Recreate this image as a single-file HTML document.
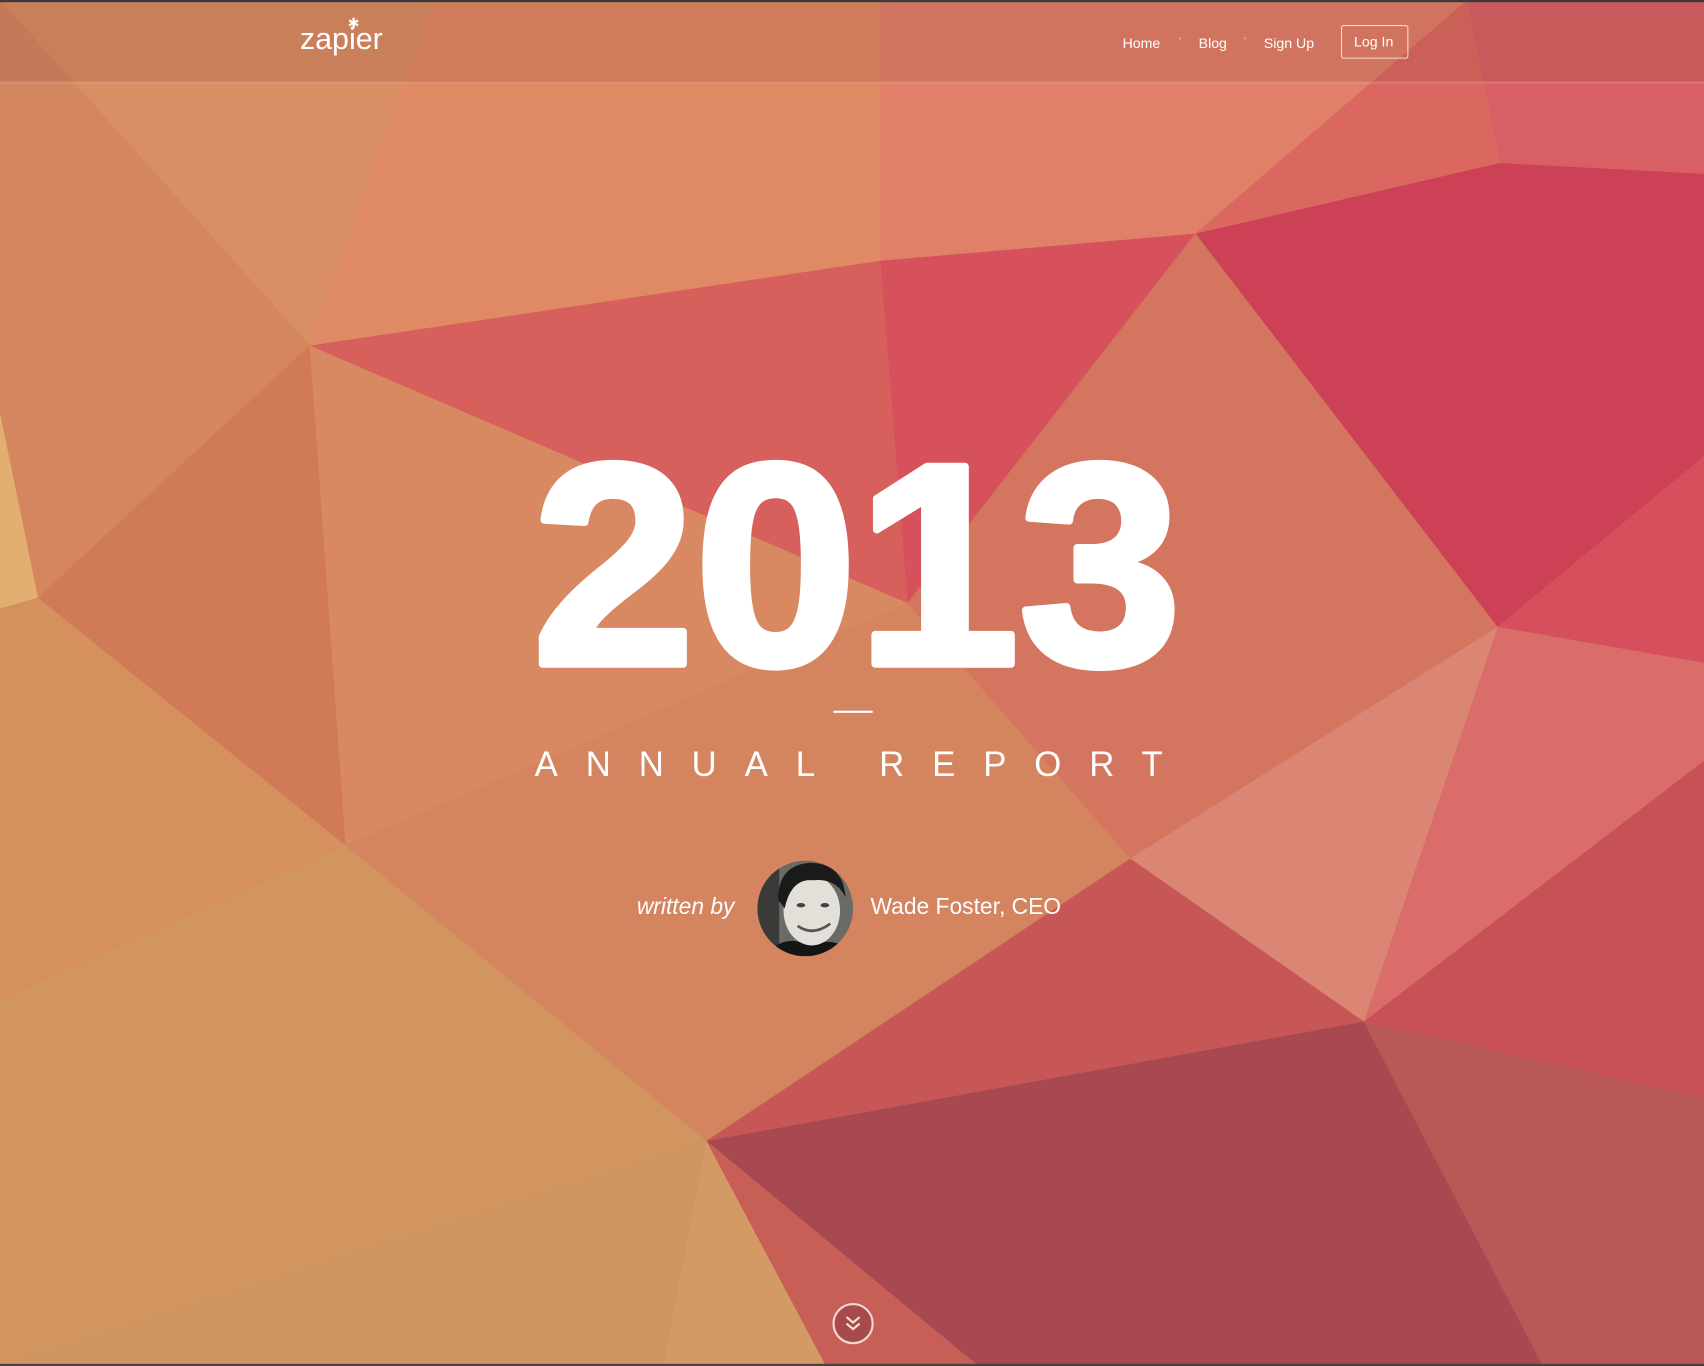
<!DOCTYPE html>
<html><head><meta charset="utf-8"><style>
html,body{margin:0;padding:0;background:#333;overflow:hidden}
svg{display:block}
</style></head><body>
<svg width="1704" height="1366" viewBox="0 0 1568 1257" preserveAspectRatio="none" xmlns="http://www.w3.org/2000/svg">
<rect width="1568" height="1257" fill="#d98a60"/>
<polygon points="0,0 400,0 285,318" fill="#dd9064"/>
<polygon points="400,0 810,0 810,240 285,318" fill="#e48a66"/>
<polygon points="810,0 1350,0 1100,215 810,240" fill="#e5806a"/>
<polygon points="1350,0 1568,0 1568,160 1380,150" fill="#da5b66"/>
<polygon points="1350,0 1380,150 1100,215" fill="#df6461"/>
<polygon points="0,0 285,318 35,550 0,380" fill="#d6875f"/>
<polygon points="0,380 35,550 0,560" fill="#e8b672"/>
<polygon points="285,318 810,240 835,555" fill="#da5a5c"/>
<polygon points="810,240 1100,215 835,555" fill="#d94a5a"/>
<polygon points="1100,215 1380,150 1568,160 1568,420 1378,577" fill="#cd3855"/>
<polygon points="1100,215 1378,577 1040,790 835,555" fill="#d6735f"/>
<polygon points="285,318 835,555 318,778" fill="#db8a62"/>
<polygon points="35,550 285,318 318,778" fill="#d27957"/>
<polygon points="0,560 35,550 318,778 0,920" fill="#d8925e"/>
<polygon points="318,778 835,555 1040,790 650,1050" fill="#d6845f"/>
<polygon points="0,920 318,778 650,1050 0,1257" fill="#d4985f"/>
<polygon points="1378,577 1568,420 1568,610" fill="#d8495c"/>
<polygon points="1378,577 1568,610 1568,700 1255,940" fill="#dd6a6b"/>
<polygon points="1040,790 1378,577 1255,940" fill="#de8777"/>
<polygon points="1568,700 1568,1010 1255,940" fill="#c94b56"/>
<polygon points="1040,790 1255,940 650,1050" fill="#c85056"/>
<polygon points="650,1050 1255,940 1420,1257 900,1257" fill="#a4404f"/>
<polygon points="1255,940 1568,1010 1568,1257 1420,1257" fill="#b85456"/>
<polygon points="650,1050 900,1257 610,1257" fill="#d59e66"/>
<polygon points="0,1257 650,1050 610,1257" fill="#d09860"/>
<polygon points="650,1050 900,1257 760,1257" fill="#c95a56"/>
<rect width="1568" height="1257" fill="rgba(200,130,100,0.12)"/>
<!-- header -->
<rect width="1568" height="76" fill="rgba(140,70,60,0.2)"/>
<rect y="75" width="1568" height="2" fill="rgba(255,220,200,0.2)"/>
<rect width="1568" height="2" fill="#3a3a3a"/>
<rect y="1255" width="1568" height="2" fill="#4a4040"/>
<text x="276" y="45" font-family="Liberation Sans, sans-serif" font-size="28" fill="#fff">zapier</text>
<text x="320" y="26" font-family="Liberation Sans, sans-serif" font-size="13" fill="#fff">✱</text>
<g font-family="Liberation Sans, sans-serif" font-size="13" fill="#fff">
<text x="1033" y="44">Home</text>
<text x="1103" y="44">Blog</text>
<text x="1163" y="44">Sign Up</text>
<text x="1246" y="43">Log In</text>
<text x="1085" y="40" font-size="8">'</text>
<text x="1145" y="40" font-size="8">'</text>
</g>
<rect x="1234.5" y="23.5" width="61" height="30" rx="2" fill="none" stroke="#f4ddd4" stroke-width="1"/>
<!-- hero -->
<text x="490" y="611" font-family="Liberation Sans, sans-serif" font-weight="bold" font-size="264" fill="#fff" stroke="#fff" stroke-width="7" stroke-linejoin="round" textLength="597" lengthAdjust="spacingAndGlyphs">2013</text>
<rect x="767" y="654" width="36" height="2" fill="#fff"/>
<text x="492" y="714" font-family="Liberation Sans, sans-serif" font-size="32" fill="#fff" textLength="578" lengthAdjust="spacing">ANNUAL REPORT</text>
<text x="586" y="841" font-family="Liberation Sans, sans-serif" font-style="italic" font-size="21" fill="#fff">written by</text>
<clipPath id="av"><circle cx="741" cy="836" r="44"/></clipPath>
<g clip-path="url(#av)">
<rect x="697" y="792" width="88" height="88" fill="#6b6b66"/>
<rect x="697" y="792" width="20" height="88" fill="#3a3a38"/>
<path d="M705,880 Q720,858 745,870 Q770,860 790,880Z" fill="#151515"/>
<ellipse cx="747" cy="838" rx="26" ry="32" fill="#e2e0d8"/>
<path d="M716,828 Q716,796 745,794 Q776,794 778,826 Q770,808 748,810 Q728,808 722,836Z" fill="#1a1a1a"/>
<path d="M734,852 Q748,862 764,850" stroke="#555" stroke-width="2.5" fill="none"/>
<ellipse cx="737" cy="833" rx="4" ry="2" fill="#444"/>
<ellipse cx="759" cy="833" rx="4" ry="2" fill="#444"/>
</g>
<text x="801" y="841" font-family="Liberation Sans, sans-serif" font-size="21" fill="#fff">Wade Foster, CEO</text>
<!-- chevron -->
<circle cx="785" cy="1218" r="18" fill="#a84a4c" stroke="#eed8d0" stroke-width="2"/>
<path d="M779,1212 L785,1217 L791,1212 M779,1218 L785,1223 L791,1218" stroke="#f0e0d8" stroke-width="2" fill="none"/>
</svg>
</body></html>
